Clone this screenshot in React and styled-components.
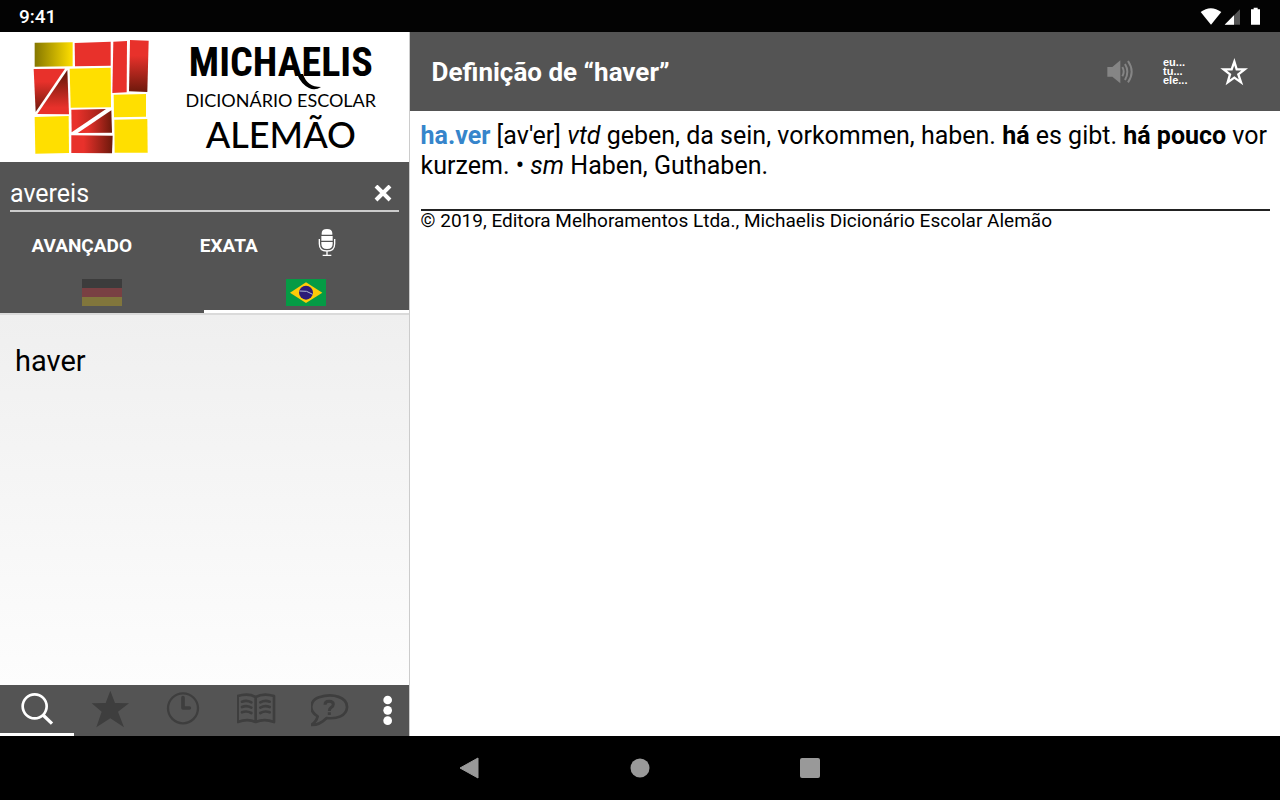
import React, { useState } from "react";
import styled, { createGlobalStyle } from "styled-components";

const GlobalStyle = createGlobalStyle`
  * { box-sizing: border-box; }
  body { margin: 0; background: #000; font-family: Roboto, "Noto Sans", sans-serif; }
  button { border: 0; padding: 0; margin: 0; background: none; color: inherit; font: inherit; cursor: pointer; }
  svg { display: block; }
`;

const Screen = styled.div`
  display: flex;
  flex-direction: column;
  min-height: 100vh;
`;

const StatusBar = styled.header`
  display: flex;
  align-items: center;
  justify-content: space-between;
  height: 32px;
  padding: 0 16px 0 19px;
  background: #030303;
  color: #fff;
  font-size: 19px;
  font-weight: 500;
`;

const Content = styled.div`
  display: flex;
  flex: 1;
  background: #fff;
`;

const Sidebar = styled.aside`
  display: flex;
  flex-direction: column;
  flex: 0 0 32%;
  border-right: 1px solid #ccc;
`;

const Brand = styled.div`
  display: flex;
  align-items: center;
  height: 130px;
  padding: 0 32px;
  gap: 33px;
  background: #fff;
`;

const BrandText = styled.div`
  display: flex;
  flex-direction: column;
  align-items: center;
  flex: 1;
  gap: 2px;
  color: #000;
  white-space: nowrap;
  font-family: Lato, sans-serif;
`;

const BrandName = styled.div`
  position: relative;
  font: 700 40px/46px "Liberation Sans Narrow", "Roboto Condensed", "Open Sans Condensed", "DejaVu Sans Condensed", sans-serif;
`;

const Flourish = styled.svg`
  position: absolute;
  right: 50px;
  bottom: -5px;
`;

const BrandLine = styled.div`
  font-size: 18px;
  line-height: 24px;
`;

const BrandLanguage = styled.div`
  font-size: 36px;
  line-height: 40px;
  font-weight: 500;
`;

const SearchPanel = styled.section`
  background: #545454;
  color: #fff;
  padding-top: 16px;
`;

const SearchRow = styled.div`
  display: flex;
  align-items: center;
  height: 34px;
  margin: 0 10px;
  border-bottom: 2px solid #ccc;
`;

const SearchInput = styled.input`
  flex: 1;
  min-width: 0;
  height: 32px;
  padding: 0;
  border: 0;
  outline: 0;
  background: transparent;
  color: #fff;
  font: 400 25px/32px Roboto, sans-serif;
`;

const ClearButton = styled.button`
  display: grid;
  place-items: center;
  width: 32px;
  height: 32px;
`;

const Modes = styled.div`
  display: grid;
  grid-template-columns: 40% 32% 16%;
  align-items: center;
  height: 67px;
`;

const ModeButton = styled.button`
  display: grid;
  place-items: center;
  height: 48px;
  font-size: 19px;
  line-height: 24px;
  font-weight: 700;
`;

const LanguageTabs = styled.div`
  display: grid;
  grid-template-columns: 1fr 1fr;
`;

const LanguageTab = styled.button`
  display: grid;
  justify-items: center;
  height: 34px;
  border-bottom: 3px solid ${(p) => (p.$active ? "#fff" : "transparent")};

  svg { opacity: ${(p) => (p.$active ? 1 : 0.28)}; }
`;

const Results = styled.ul`
  flex: 1;
  margin: 0;
  padding: 22px 0;
  list-style: none;
  border-top: 2px solid #dadada;
  background: linear-gradient(#efefef, #fdfdfd);
`;

const ResultButton = styled.button`
  display: block;
  width: 100%;
  padding: 4px 15px;
  text-align: left;
  color: #000;
  font-size: 29px;
  line-height: 40px;
`;

const BottomTabs = styled.nav`
  display: grid;
  grid-template-columns: repeat(5, 18fr) 10fr;
  height: 51px;
  background: #545454;
`;

const BottomTab = styled.button`
  display: grid;
  justify-items: center;
  padding-top: 5px;
  min-width: 0;
  color: ${(p) => (p.$bright ? "#fff" : "#3e3e3e")};
  border-bottom: 3px solid ${(p) => (p.$active ? "#fff" : "transparent")};
`;

const Article = styled.main`
  flex: 1;
  min-width: 0;
  background: #fff;
  color: #000;
`;

const ArticleHeader = styled.div`
  display: flex;
  align-items: center;
  height: 79px;
  padding: 0 18px 0 22px;
  background: #545454;
  color: #fff;
`;

const Title = styled.h1`
  flex: 1;
  margin: 0;
  font-size: 26px;
  line-height: 36px;
  font-weight: 700;
`;

const HeaderButton = styled.button`
  display: grid;
  place-items: center;
  width: 57px;
  height: 48px;
`;

const Conjugation = styled.span`
  display: block;
  width: 27px;
  text-align: left;
  white-space: nowrap;
  font: 700 11px/9px "Liberation Sans", Arial, sans-serif;
`;

const Definition = styled.p`
  margin: 0;
  padding: 10px 4px 28px 11px;
  font-size: 25px;
  line-height: 30px;
`;

const Headword = styled.strong`
  color: #3685cb;
`;

const Copyright = styled.footer`
  margin: 0 10px 0 11px;
  border-top: 2px solid #222;
  font-size: 19px;
  line-height: 20px;
`;

const SystemNav = styled.nav`
  display: flex;
  justify-content: center;
  height: 64px;
  background: #000;
`;

const SystemButton = styled.button`
  display: grid;
  place-items: center;
  width: 170px;
`;

const StatusIcons = () => (
  <svg width="64" height="20" viewBox="360 13 192 60" aria-hidden="true">
    <path d="M362 31Q392 8 424 31L393 69Z" fill="#fff" />
    <path d="M480 23V69H434Z" fill="#555" />
    <path d="M462 41V69H434Z" fill="#fff" />
    <path d="M513 23H521V18H533V23H540V69H513Z" fill="#fff" />
  </svg>
);

const Mosaic = () => (
  <svg width="120" height="118" viewBox="96 112 360 354" aria-hidden="true">
    <defs>
      <linearGradient id="olive"><stop offset="0" stopColor="#857700" /><stop offset="1" stopColor="#ffdf00" /></linearGradient>
      <linearGradient id="redDown" x2="0" y2="1"><stop offset=".3" stopColor="#e8312b" /><stop offset="1" stopColor="#6d190c" /></linearGradient>
      <linearGradient id="redRight"><stop offset=".3" stopColor="#e8312b" /><stop offset="1" stopColor="#6d190c" /></linearGradient>
      <linearGradient id="redUpperLeft" x1="0" y1="0" x2="0" y2="1"><stop offset=".3" stopColor="#e8312b" /><stop offset="1" stopColor="#6d190c" /></linearGradient>
      <linearGradient id="redLowerRight" x1="0" y1="0" x2="0" y2="1"><stop offset=".1" stopColor="#6d190c" /><stop offset=".85" stopColor="#e8312b" /></linearGradient>
      <linearGradient id="redLeft"><stop offset=".15" stopColor="#e8312b" /><stop offset="1" stopColor="#941f14" /></linearGradient>
    </defs>
    <path d="M104 126L218 125V197L104 198Z" fill="url(#olive)" />
    <path d="M224 127L332 123V195L225 197Z" fill="#e8312b" />
    <path d="M340 123L381 121L380 275L337 277Z" fill="#e8312b" />
    <path d="M390 118L446 120L442 274L387 272Z" fill="url(#redDown)" />
    <path d="M101 205L195 204L107 334Z" fill="url(#redUpperLeft)" />
    <path d="M202 208L207 341L112 340Z" fill="url(#redLowerRight)" />
    <path d="M209 204L332 201L333 320L212 321Z" fill="#ffdf00" />
    <path d="M341 282L438 280V348L342 350Z" fill="#ffdf00" />
    <path d="M214 327L318 325L215 395Z" fill="url(#redLeft)" />
    <path d="M334 329L336 396L233 397Z" fill="url(#redRight)" />
    <path d="M214 404L338 405L336 458L214 457Z" fill="url(#redRight)" />
    <path d="M104 349L206 346L207 457L106 459Z" fill="#ffdf00" />
    <path d="M343 357L442 355L443 456H344Z" fill="#ffdf00" />
  </svg>
);

const Germany = () => (
  <svg width="40" height="27" viewBox="0 0 40 27" role="img" aria-label="Alemão">
    <path d="M0 0H40V9H0Z" fill="#000" />
    <path d="M0 9H40V18H0Z" fill="#d90f18" />
    <path d="M0 18H40V27H0Z" fill="#f5ce00" />
  </svg>
);

const Brazil = () => (
  <svg width="40" height="27" viewBox="0 0 120 81" role="img" aria-label="Português">
    <path d="M0 0H120V81H0Z" fill="#059b45" />
    <path d="M12 41L60 10L109 41L60 72Z" fill="#fecb08" />
    <circle cx="60" cy="41" r="21" fill="#2c1a78" />
    <path d="M41 36Q63 33 80 46" fill="none" stroke="#aeb9d6" strokeWidth="3" />
  </svg>
);

const Microphone = () => (
  <svg width="18" height="37" viewBox="338 186 54 111" role="img" aria-label="Voz">
    <path d="M349 209V205Q349 192 365 192Q381 192 381 205V209ZM348 213H382V227H348ZM348 231H382V236Q382 252 365 252Q348 252 348 236Z" fill="#fff" />
    <path d="M342 222V236Q342 258 365 258Q388 258 388 236V222M365 258V271M352 271H378" fill="none" stroke="#fff" strokeWidth="4" />
  </svg>
);

const Magnifier = () => (
  <svg width="40" height="40" viewBox="50 31 120 120" fill="none" stroke="currentColor" aria-hidden="true">
    <circle cx="103" cy="80" r="36" strokeWidth="8" />
    <path d="M128 106L155 132" strokeWidth="10" />
  </svg>
);

const FilledStar = () => (
  <svg width="40" height="40" viewBox="271 31 120 120" fill="currentColor" aria-hidden="true">
    <path d="M332 33L346 70L388 71L355 96L373 143L332 116L290 143L306 96L276 71L318 70Z" />
  </svg>
);

const Clock = () => (
  <svg width="40" height="40" viewBox="492 31 120 120" fill="none" stroke="currentColor" aria-hidden="true">
    <circle cx="549" cy="86" r="45" strokeWidth="7" />
    <path d="M549 54V85H568" strokeWidth="11" strokeLinecap="round" strokeLinejoin="round" />
  </svg>
);

const Book = () => (
  <svg width="40" height="40" viewBox="98 31 120 120" fill="none" stroke="currentColor" aria-hidden="true">
    <path d="M154 52Q132 39 100 49V127Q130 116 154 127Q180 116 209 127V49Q177 39 154 52V126" strokeWidth="8" strokeLinejoin="round" />
    <path d="M113 66Q127 60 141 68M113 82Q127 76 141 84M113 98Q127 92 141 100M168 68Q182 60 196 66M168 84Q182 76 196 82M168 100Q182 92 196 98" strokeWidth="8" strokeLinecap="round" />
  </svg>
);

const Help = () => (
  <svg width="40" height="40" viewBox="319 31 120 120" fill="none" stroke="currentColor" aria-hidden="true">
    <path d="M339 110C310 94 316 62 343 53C386 38 429 54 427 84C425 108 397 119 366 115Q344 137 320 136Q335 126 339 110Z" strokeWidth="8" strokeLinejoin="round" />
    <path d="M361 75Q361 65 373 65Q386 65 386 74Q386 80 379 84Q374 87 374 94M374 98V106" strokeWidth="9" />
  </svg>
);

const More = () => (
  <svg width="40" height="40" viewBox="488 31 120 120" fill="currentColor" aria-hidden="true">
    <circle cx="547" cy="61" r="13" /><circle cx="547" cy="92" r="13" /><circle cx="547" cy="123" r="13" />
  </svg>
);

const Speaker = () => (
  <svg width="30" height="30" viewBox="73 170 90 90" fill="none" stroke="#858585" aria-hidden="true">
    <path d="M80 200H95L119 180V249L95 229H80Z" fill="#858585" stroke="none" />
    <path d="M125 200Q133 214 125 228M133 191Q147 214 133 239M142 182Q164 214 142 246" strokeWidth="6" />
  </svg>
);

const OutlineStar = () => (
  <svg width="30" height="30" viewBox="416 170 90 90" fill="none" stroke="#fff" aria-hidden="true">
    <path d="M462 184L469 207H493L474 222L482 246L462 232L442 246L449 222L430 207H454Z" strokeWidth="7" />
  </svg>
);

const TABS = [
  { id: "search", label: "Pesquisa", Icon: Magnifier },
  { id: "favorites", label: "Favoritos", Icon: FilledStar },
  { id: "history", label: "Histórico", Icon: Clock },
  { id: "index", label: "Dicionário", Icon: Book },
  { id: "help", label: "Ajuda", Icon: Help },
];

export default function App() {
  const [query, setQuery] = useState("avereis");
  const [language, setLanguage] = useState("pt");
  const [tab, setTab] = useState("search");

  return (
    <Screen>
      <GlobalStyle />
      <StatusBar>
        <span>9:41</span>
        <StatusIcons />
      </StatusBar>
      <Content>
        <Sidebar>
          <Brand>
            <Mosaic />
            <BrandText>
              <BrandName>
                MICHAELIS
                <Flourish width="26" height="18" viewBox="0 0 26 18" aria-hidden="true">
                  <path d="M0 1H6Q10 14 24 14Q18 18 12 15Q4 11 0 1Z" fill="#000" />
                </Flourish>
              </BrandName>
              <BrandLine>DICIONÁRIO ESCOLAR</BrandLine>
              <BrandLanguage>ALEMÃO</BrandLanguage>
            </BrandText>
          </Brand>
          <SearchPanel>
            <SearchRow>
              <SearchInput aria-label="Pesquisar" value={query} onChange={(e) => setQuery(e.target.value)} />
              <ClearButton aria-label="Limpar" onClick={() => setQuery("")}>
                <svg width="18" height="18" viewBox="0 0 18 18" aria-hidden="true">
                  <path d="M2 1L16 15M16 1L2 15" stroke="#fff" strokeWidth="4" />
                </svg>
              </ClearButton>
            </SearchRow>
            <Modes>
              <ModeButton>AVANÇADO</ModeButton>
              <ModeButton>EXATA</ModeButton>
              <ModeButton><Microphone /></ModeButton>
            </Modes>
            <LanguageTabs>
              <LanguageTab $active={language === "de"} onClick={() => setLanguage("de")}><Germany /></LanguageTab>
              <LanguageTab $active={language === "pt"} onClick={() => setLanguage("pt")}><Brazil /></LanguageTab>
            </LanguageTabs>
          </SearchPanel>
          <Results>
            <li><ResultButton>haver</ResultButton></li>
          </Results>
          <BottomTabs>
            {TABS.map(({ id, label, Icon }) => (
              <BottomTab key={id} aria-label={label} $active={tab === id} $bright={tab === id} onClick={() => setTab(id)}>
                <Icon />
              </BottomTab>
            ))}
            <BottomTab aria-label="Mais opções" $bright><More /></BottomTab>
          </BottomTabs>
        </Sidebar>
        <Article>
          <ArticleHeader>
            <Title>Definição de “haver”</Title>
            <HeaderButton aria-label="Ouvir"><Speaker /></HeaderButton>
            <HeaderButton><Conjugation>eu...<br />tu...<br />ele...</Conjugation></HeaderButton>
            <HeaderButton aria-label="Favorito"><OutlineStar /></HeaderButton>
          </ArticleHeader>
          <Definition>
            <Headword>ha.ver</Headword> [av'er] <em>vtd</em> geben, da sein, vorkommen, haben. <strong>há</strong> es gibt.{" "}
            <strong>há pouco</strong> vor kurzem. • <em>sm</em> Haben, Guthaben.
          </Definition>
          <Copyright>© 2019, Editora Melhoramentos Ltda., Michaelis Dicionário Escolar Alemão</Copyright>
        </Article>
      </Content>
      <SystemNav>
        <SystemButton aria-label="Voltar">
          <svg width="22" height="22" viewBox="0 0 22 22"><path d="M1 11L19 1V21Z" fill="#999" stroke="#999" strokeLinejoin="round" /></svg>
        </SystemButton>
        <SystemButton aria-label="Início">
          <svg width="20" height="20" viewBox="0 0 20 20"><circle cx="10" cy="10" r="9.5" fill="#999" /></svg>
        </SystemButton>
        <SystemButton aria-label="Recentes">
          <svg width="20" height="20" viewBox="0 0 20 20"><rect width="20" height="20" rx="2" fill="#999" /></svg>
        </SystemButton>
      </SystemNav>
    </Screen>
  );
}
